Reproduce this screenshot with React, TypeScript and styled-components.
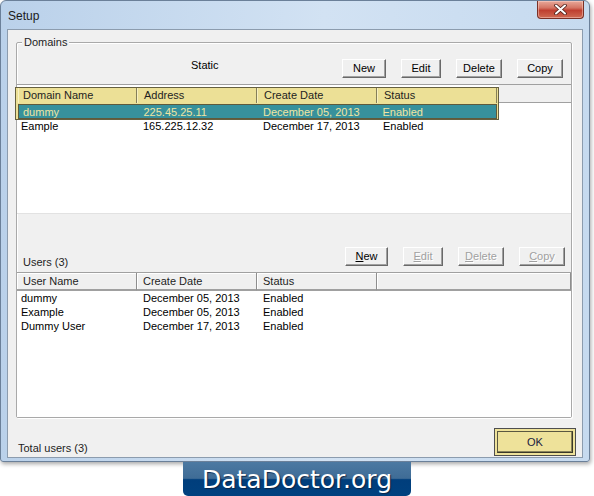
import React from "react";
import styled, { createGlobalStyle } from "styled-components";

const GlobalStyle = createGlobalStyle`
  html, body {
    margin: 0;
    padding: 0;
    background: #fff;
  }
  body {
    font-family: "Liberation Sans", Arial, sans-serif;
    font-size: 11px;
    color: #000;
  }
  * {
    box-sizing: border-box;
  }
`;

type Domain = { name: string; address: string; date: string; status: string };
type User = { name: string; date: string; status: string };

const domains: Domain[] = [
  { name: "dummy", address: "225.45.25.11", date: "December 05, 2013", status: "Enabled" },
  { name: "Eample", address: "165.225.12.32", date: "December 17, 2013", status: "Enabled" },
];

const users: User[] = [
  { name: "dummy", date: "December 05, 2013", status: "Enabled" },
  { name: "Example", date: "December 05, 2013", status: "Enabled" },
  { name: "Dummy User", date: "December 17, 2013", status: "Enabled" },
];

const CloseGlyph = () => (
  <svg width="13" height="11" viewBox="0 0 13 11">
    <path d="M2 1.5 L11 9.5 M11 1.5 L2 9.5" stroke="#4a1d16" strokeWidth="3.6" strokeLinecap="round" />
    <path d="M2 1.5 L11 9.5 M11 1.5 L2 9.5" stroke="#fff" strokeWidth="2" strokeLinecap="round" />
  </svg>
);

const App = () => {
  return (
    <Page>
      <GlobalStyle />
      <Window>
        <TitleBar>
          <Title>Setup</Title>
          <CloseButton>
            <CloseGlyph />
          </CloseButton>
        </TitleBar>
        <Client>
          <GroupBox>
            <Legend>Domains</Legend>
            <Toolbar $pad={8}>
              <StaticLabel>Static</StaticLabel>
              <ButtonRow>
                <Button $w={44}>New</Button>
                <Button $w={40}>Edit</Button>
                <Button $w={46}>Delete</Button>
                <Button $w={46}>Copy</Button>
              </ButtonRow>
            </Toolbar>
            <Panel>
              <DomainArea>
                <DomainTop>
                  <Highlight>
                    <YellowHead>
                      <YellowCell $first>Domain Name</YellowCell>
                      <YellowCell>Address</YellowCell>
                      <YellowCell>Create Date</YellowCell>
                      <YellowCell>Status</YellowCell>
                    </YellowHead>
                    <SelectedRow>
                      <DataCell $first $w={119}>{domains[0].name}</DataCell>
                      <DataCell $w={120}>{domains[0].address}</DataCell>
                      <DataCell $w={120}>{domains[0].date}</DataCell>
                      <DataCell $w={120}>{domains[0].status}</DataCell>
                    </SelectedRow>
                  </Highlight>
                  <HeadFiller />
                </DomainTop>
                {domains.slice(1).map((d) => (
                  <Row key={d.name}>
                    <DataCell $first $w={120}>{d.name}</DataCell>
                    <DataCell $w={120}>{d.address}</DataCell>
                    <DataCell $w={120}>{d.date}</DataCell>
                    <DataCell $w={120}>{d.status}</DataCell>
                  </Row>
                ))}
              </DomainArea>
              <UsersBar>
                <UsersLabel>Users (3)</UsersLabel>
                <ButtonRow>
                  <Button $w={43}>
                    <u>N</u>ew
                  </Button>
                  <Button $w={40} disabled>
                    <u>E</u>dit
                  </Button>
                  <Button $w={46} disabled>
                    <u>D</u>elete
                  </Button>
                  <Button $w={46} disabled>
                    <u>C</u>opy
                  </Button>
                </ButtonRow>
              </UsersBar>
              <ListHeader>
                <HeadCell $w={120}>User Name</HeadCell>
                <HeadCell $w={120}>Create Date</HeadCell>
                <HeadCell $w={120}>Status</HeadCell>
                <HeadCell />
              </ListHeader>
              <UsersBody>
                {users.map((u) => (
                  <Row key={u.name}>
                    <DataCell $first $w={120}>{u.name}</DataCell>
                    <DataCell $w={120}>{u.date}</DataCell>
                    <DataCell $w={120}>{u.status}</DataCell>
                  </Row>
                ))}
              </UsersBody>
            </Panel>
          </GroupBox>
          <Footer>
            <TotalLabel>Total users (3)</TotalLabel>
            <OkButton>
              <OkInner>OK</OkInner>
            </OkButton>
          </Footer>
        </Client>
      </Window>
      <Banner>DataDoctor.org</Banner>
    </Page>
  );
};

export default App;

const Page = styled.div`
  width: 594px;
  height: 496px;
  overflow: hidden;
`;

const Window = styled.div`
  width: 590px;
  height: 462px;
  display: flex;
  flex-direction: column;
  padding: 0 6px 3px 6px;
  border: 1px solid #6b8099;
  border-radius: 6px 6px 3px 3px;
  background: linear-gradient(90deg, #bad1ea 0%, #d2e2f3 55%, #c6daef 100%);
  box-shadow: 1px 2px 4px rgba(0, 0, 0, 0.35);
`;

const TitleBar = styled.div`
  height: 28px;
  display: flex;
  justify-content: space-between;
  align-items: flex-start;
`;

const Title = styled.span`
  padding: 8px 0 0 1px;
  font-size: 12px;
  line-height: 14px;
  color: #1b1b1b;
`;

const CloseButton = styled.div`
  width: 47px;
  height: 18px;
  margin-right: -1px;
  display: flex;
  align-items: center;
  justify-content: center;
  border: 1px solid #7a3026;
  border-top: none;
  border-radius: 0 0 4px 4px;
  background: linear-gradient(#e8a99a 0%, #d47564 40%, #bf3f30 55%, #cf6a52 100%);
  box-shadow: inset 0 0 0 1px rgba(255, 220, 210, 0.45);
`;

const Client = styled.div`
  flex: 1;
  display: flex;
  flex-direction: column;
  background: #f0f0f0;
  border: 1px solid #8c9cae;
`;

const GroupBox = styled.div`
  height: 376px;
  margin: 12px 10px 0 8px;
  display: flex;
  flex-direction: column;
  border: 1px solid #a9a9a9;
  border-radius: 2px;
  box-shadow: inset 1px 1px 0 #fff, 1px 1px 0 #fff;
`;

const Legend = styled.span`
  align-self: flex-start;
  margin: -7px 0 0 5px;
  padding: 0 2px;
  line-height: 13px;
  background: #f0f0f0;
  color: #1e1e1e;
`;

const Toolbar = styled.div<{ $pad: number }>`
  height: 35px;
  display: flex;
  align-items: flex-end;
  justify-content: space-between;
  padding: 0 ${({ $pad }) => $pad}px 6px 0;
`;

const StaticLabel = styled.span`
  margin: 0 0 6px 174px;
  line-height: 13px;
`;

const ButtonRow = styled.div`
  display: flex;
  gap: 15px;
`;

const Button = styled.button<{ $w: number }>`
  width: ${({ $w }) => $w}px;
  height: 19px;
  padding: 0;
  font-family: inherit;
  font-size: 11px;
  line-height: 15px;
  color: ${({ disabled }) => (disabled ? "#a0a0a0" : "#000")};
  text-shadow: ${({ disabled }) => (disabled ? "1px 1px 0 #fff" : "none")};
  background: #f0f0f0;
  border: 1px solid;
  border-color: #fff #696969 #696969 #fff;
  box-shadow: inset -1px -1px 0 #a0a0a0;
  border-radius: 0;
`;

const Panel = styled.div`
  flex: 1;
  display: flex;
  flex-direction: column;
  border-top: 1px solid #a0a0a0;
`;

const DomainArea = styled.div`
  height: 129px;
  background: #fff;
  border-bottom: 1px solid #e2e2e2;
`;

const DomainTop = styled.div`
  display: flex;
  align-items: flex-start;
`;

const Highlight = styled.div`
  width: 484px;
  margin: 2px 0 0 -2px;
  padding: 0 1px 0 2px;
  border: 1px solid #66603f;
  background: #ece096;
`;

const YellowHead = styled.div`
  display: flex;
  height: 15px;
`;

const YellowCell = styled.div<{ $first?: boolean }>`
  width: ${({ $first }) => ($first ? 119 : 120)}px;
  padding-left: ${({ $first }) => ($first ? 5 : 7)}px;
  line-height: 15px;
  color: #1e1e1e;
  border-right: 1px solid #857f58;
  box-shadow: inset 1px 0 0 #f8f0c0;
  white-space: nowrap;
`;

const SelectedRow = styled.div`
  display: flex;
  height: 15px;
  margin-top: 1px;
  padding-top: 1px;
  border: 1px solid #5e5a3c;
  background: #37919c;
  color: #f0e5a2;
`;

const HeadFiller = styled.div`
  flex: 1;
  height: 18px;
  background: #f0f0f0;
  border-bottom: 1px solid #a0a0a0;
`;

const Row = styled.div`
  display: flex;
  height: 14px;
`;

const DataCell = styled.div<{ $first?: boolean; $w: number }>`
  width: ${({ $w }) => $w}px;
  padding-left: ${({ $first }) => ($first ? 4 : 6)}px;
  line-height: 13px;
  white-space: nowrap;
`;

const UsersBar = styled.div`
  height: 58px;
  display: flex;
  align-items: flex-end;
  justify-content: space-between;
  padding: 0 6px 6px 0;
`;

const UsersLabel = styled.span`
  margin: 0 0 -3px 6px;
  line-height: 13px;
  color: #1e1e1e;
`;

const ListHeader = styled.div`
  height: 19px;
  display: flex;
  border-top: 1px solid #a0a0a0;
`;

const HeadCell = styled.div<{ $w?: number }>`
  ${({ $w }) => ($w ? `width: ${$w}px;` : "flex: 1;")}
  height: 18px;
  padding-left: 6px;
  line-height: 17px;
  color: #1e1e1e;
  background: #f0f0f0;
  border-right: 1px solid #8e8e8e;
  border-bottom: 2px solid #a0a0a0;
  box-shadow: inset 1px 1px 0 #fff;
  white-space: nowrap;
`;

const UsersBody = styled.div`
  flex: 1;
  padding-top: 1px;
  background: #fff;
`;

const Footer = styled.div`
  height: 28px;
  margin-top: 10px;
  display: flex;
  align-items: flex-end;
  justify-content: space-between;
  padding: 0 6px 0 10px;
`;

const TotalLabel = styled.span`
  margin-bottom: 1px;
  line-height: 13px;
  color: #1e1e1e;
`;

const OkButton = styled.div`
  width: 82px;
  height: 28px;
  padding: 2px;
  border: 1px solid #4e4e4e;
  background: #eee29a;
`;

const OkInner = styled.div`
  height: 100%;
  display: flex;
  align-items: center;
  justify-content: center;
  border: 1px solid;
  border-color: #5a5740 #3a3828 #3a3828 #5a5740;
  box-shadow: inset -1px -1px 0 #8a845c;
  color: #1a1a40;
`;

const Banner = styled.div`
  width: 228px;
  height: 34px;
  margin-left: 183px;
  padding-top: 1px;
  display: flex;
  align-items: center;
  justify-content: center;
  border-radius: 0 0 5px 5px;
  background: linear-gradient(#4c79a2 0%, #3f6c96 48%, #003e7c 52%, #00417f 100%);
  font-family: "DejaVu Sans", Verdana, sans-serif;
  font-size: 25px;
  color: #fff;
  text-shadow: 1px 1px 1px #0b2547;
`;
